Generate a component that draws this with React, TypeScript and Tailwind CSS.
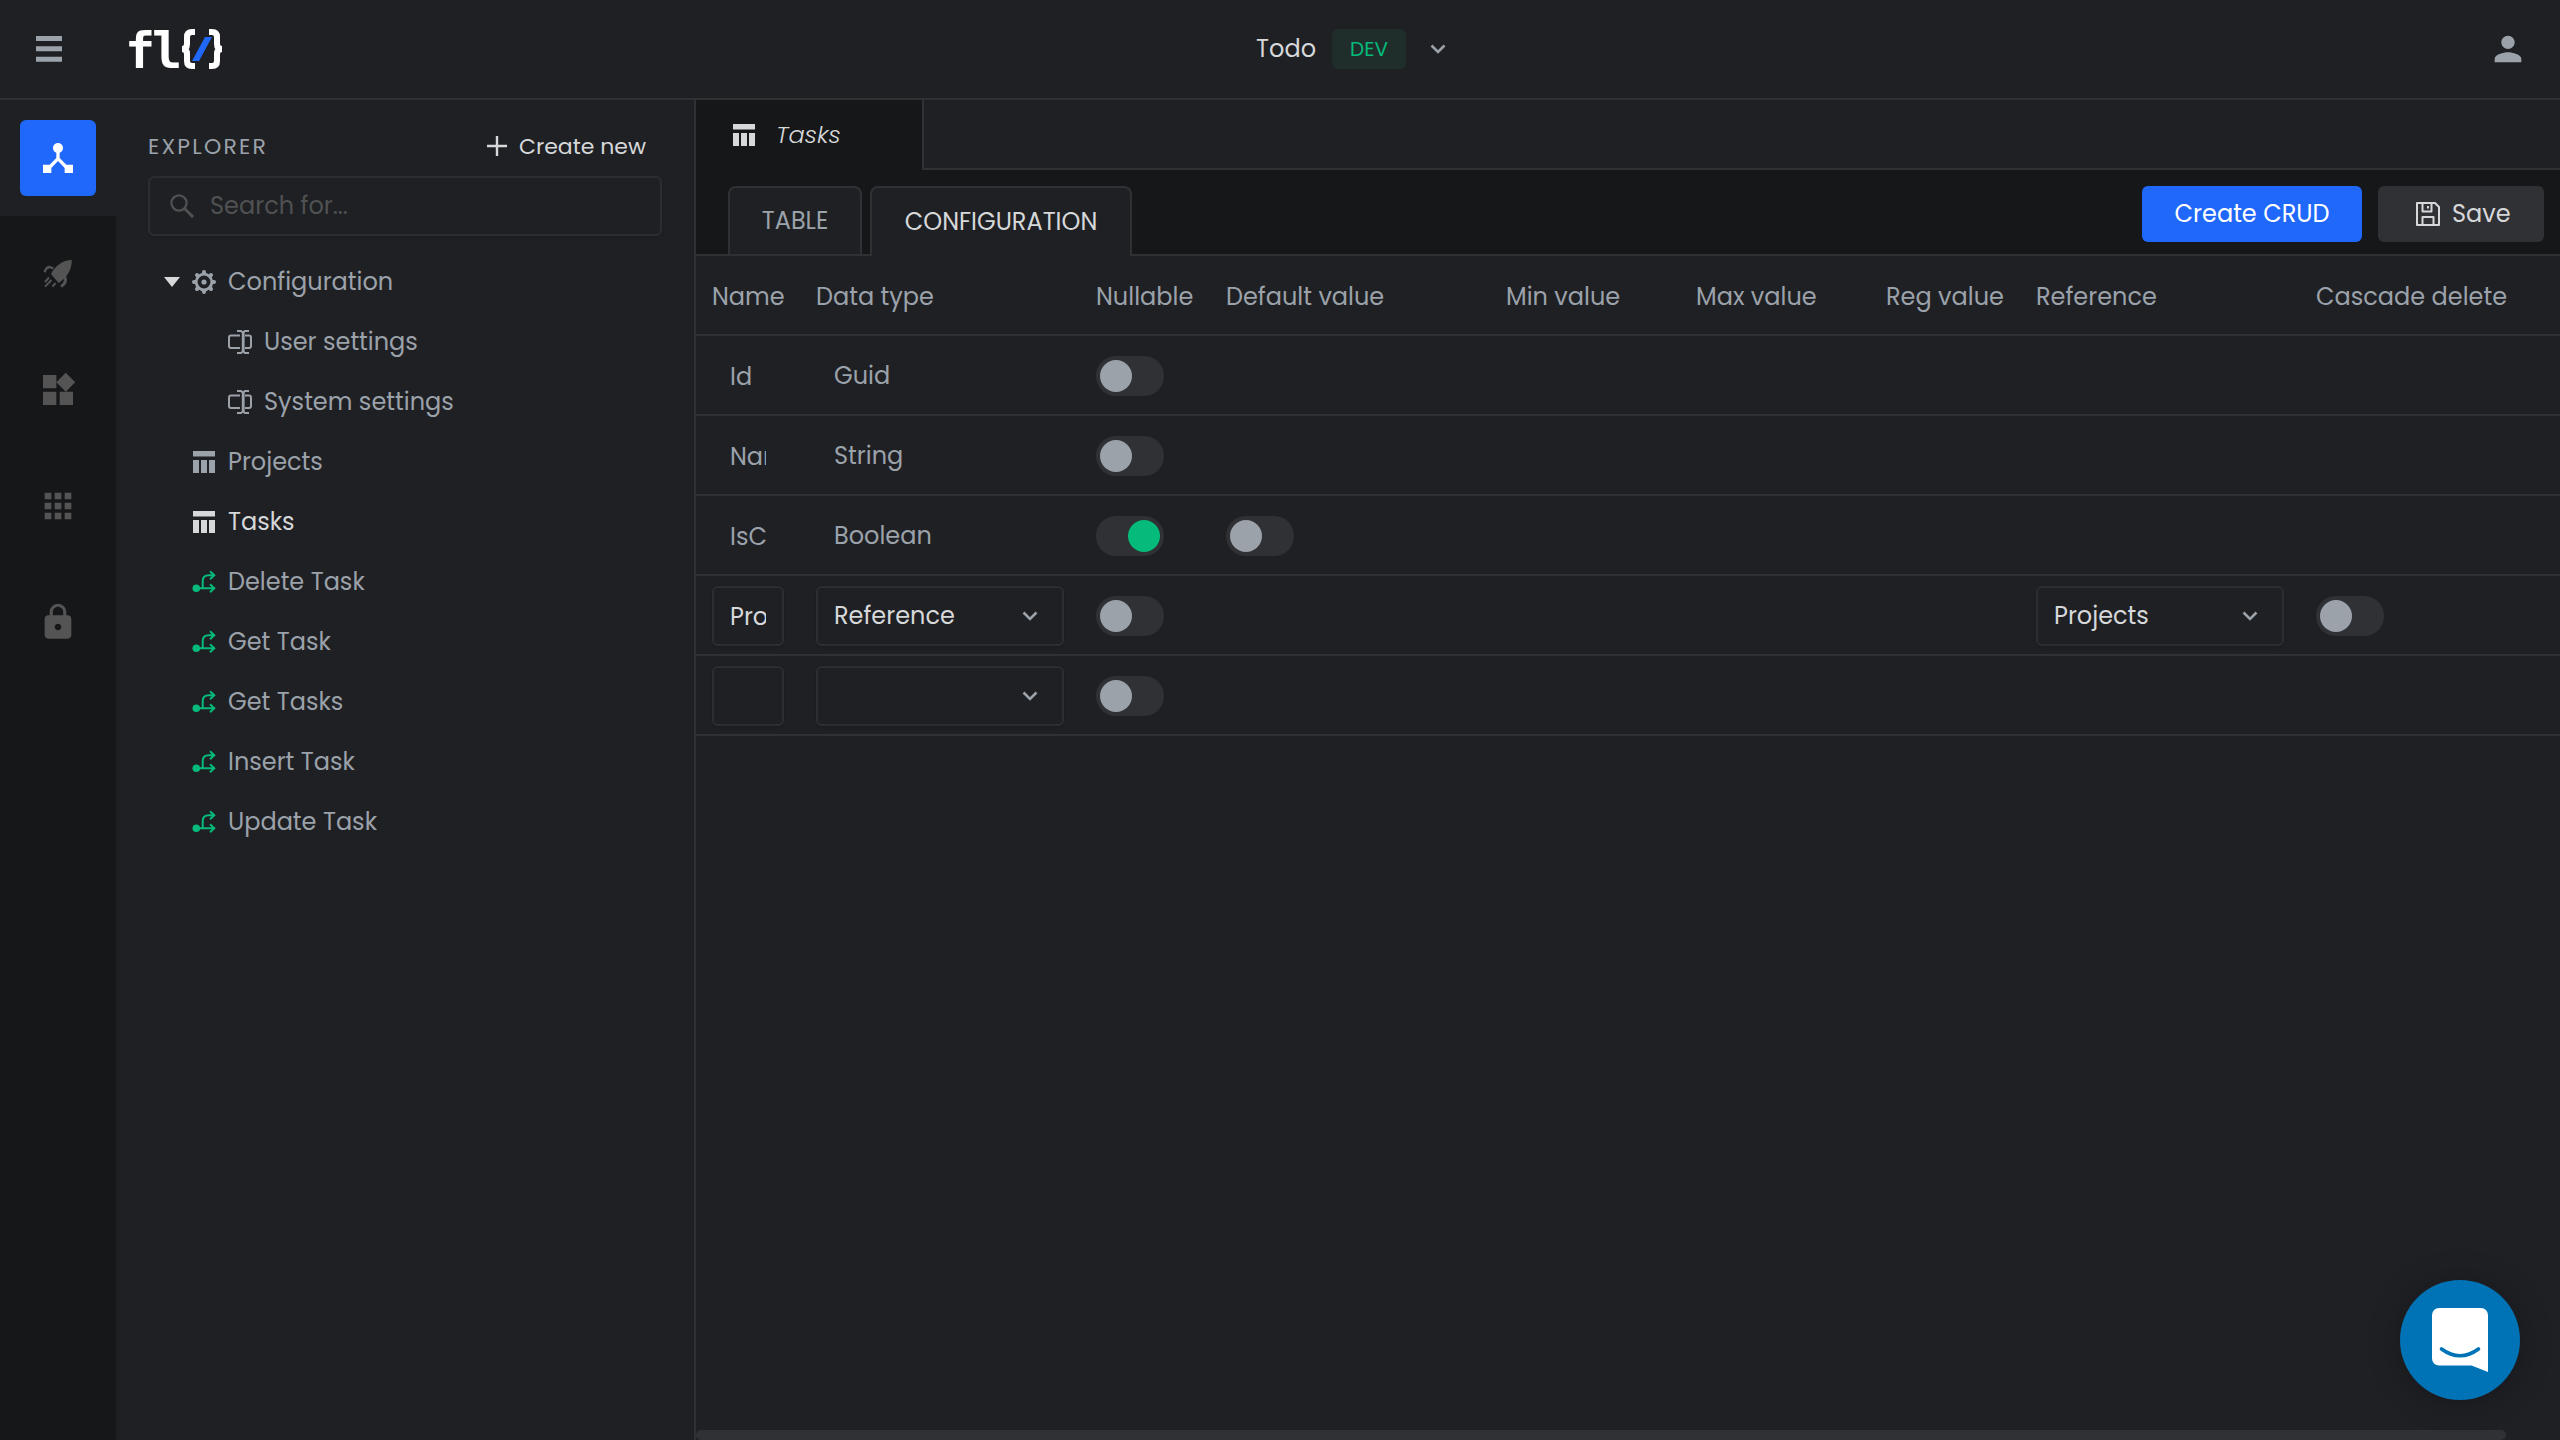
import React from "react";
import { MdApps, MdDeviceHub, MdLock, MdPerson, MdWidgets } from "react-icons/md";

// ─── Icons ────────────────────────────────────────────────────────────────────

type IconProps = { className?: string };

const MenuIcon = () => (
  <svg viewBox="0 0 26 26" className="h-[26px] w-[26px]" fill="currentColor">
    <path d="M0 0h26v5H0zM0 10.300h26v5H0zM0 20.800h26v5H0z" />
  </svg>
);

const RocketIcon = () => (
  <svg viewBox="0 0 32 32" className="h-8 w-8" fill="currentColor">
    <path d="M29.800 2C21 2 13 8 9 16l7.600 9C25 19.500 29.800 12 29.800 2z" />
    <g fill="none" stroke="currentColor" strokeWidth="2">
      <path d="M2.600 14.300C3.500 11 5 9.300 7.500 9l4 1.500" strokeWidth="2.400" />
      <path d="M22.500 18.500c1.500 3 1.500 7-3.500 10" strokeWidth="3.200" />
      <path d="M7 19.500l-4 4.500M9.500 22L3 28.600M13.500 25l-3 3.600" />
    </g>
  </svg>
);

const GearIcon = () => (
  <svg viewBox="0 0 24 24" className="h-6 w-6" fill="none" stroke="currentColor">
    <circle cx="12" cy="12" r="7.800" strokeWidth="2.800" />
    <circle cx="12" cy="12" r="2.600" fill="currentColor" stroke="none" />
    <path
      d="M12 3V2M12 22v-1M3 12H2M22 12h-1M5.600 5.600L5 5M19 19l-.6-.6M5.600 18.400L5 19M19 5l-.6.6"
      strokeWidth="4"
      strokeLinecap="round"
    />
  </svg>
);

const FieldIcon = () => (
  <svg viewBox="0 0 24 24" className="h-6 w-6" fill="none" stroke="currentColor" strokeWidth="2">
    <path d="M12 5.500H3a2 2 0 0 0-2 2V16a2 2 0 0 0 2 2h9M17 5.500h4a2 2 0 0 1 2 2V16a2 2 0 0 1-2 2h-4" />
    <path d="M9 1h4l2 1.500L17 1h4M9 23h4l2-1.500 2 1.500h4" />
    <path d="M15.200 2v20" strokeWidth="2.800" />
  </svg>
);

const TableIcon = () => (
  <svg viewBox="0 0 24 24" className="h-6 w-6" fill="currentColor">
    <path d="M1 1h22v5.600H1zM1 10h6v13H1zM9 10h6v13H9zM17 10h6v13h-6z" />
  </svg>
);

const FlowIcon = () => (
  <svg viewBox="0 0 24 24" className="h-6 w-6 text-[#05bb7b]" fill="none" stroke="currentColor" strokeWidth="2">
    <circle cx="4.300" cy="18.300" r="3.800" fill="currentColor" stroke="none" />
    <path d="M4 18.300h18M10.700 18.300V11c0-4 2-5.800 6-5.800h5.300" />
    <path d="M18 1.200l4.300 4-4.300 4M18 14.300l4.300 4-4.300 4" />
  </svg>
);

const SearchIcon = () => (
  <svg viewBox="0 0 24 24" className="h-6 w-6 text-[#4f5152]" fill="none" stroke="currentColor" strokeWidth="2.200">
    <circle cx="9" cy="9" r="7.600" />
    <path d="M14.500 14.500l8.500 8.500" strokeWidth="2.800" />
  </svg>
);

const PlusIcon = () => (
  <svg viewBox="0 0 20 20" className="h-5 w-5" stroke="currentColor" strokeWidth="2.400">
    <path d="M10 0v20M0 10h20" />
  </svg>
);

const SaveIcon = () => (
  <svg viewBox="0 0 24 24" className="h-6 w-6" fill="none" stroke="currentColor" strokeWidth="2" strokeLinejoin="round">
    <path d="M1 1h18l4 4v18H1z" />
    <path d="M6.500 1v8.500h9V1M12 4v2.500M6.500 23v-8h11v8" />
  </svg>
);

const ChevronIcon = ({ className }: IconProps) => (
  <svg viewBox="0 0 16 10" className={className} fill="none" stroke="currentColor" strokeWidth="2.600">
    <path d="M1.500 1.500L8 8l6.500-6.500" />
  </svg>
);

const Logo = () => (
  <svg viewBox="-4 -8 104 60" className="h-[60px] w-[104px]" fill="none">
    <text x="-1 26" y="41" fill="#fff" className="font-['DejaVu_Sans_Mono'] text-[50px] font-bold">
      fl
    </text>
    <g stroke="#fff" strokeWidth="6">
      <path d="M69 5h-3q-5 0-5 5v7q0 5-5 5q5 0 5 5v7q0 5 5 5h3" />
      <path d="M83 5h3q5 0 5 5v7q0 5 5 5q-5 0-5 5v7q0 5-5 5h-3" />
    </g>
    <path d="M79 10h7L73 34h-7z" fill="#2068fa" />
  </svg>
);

// ─── Top Bar ──────────────────────────────────────────────────────────────────

const TopBar = () => (
  <header className="grid h-[100px] grid-cols-[1fr_auto_1fr] items-center border-b-2 border-[#303135] text-[#9ba2aa]">
    <div className="flex items-center gap-[60px] pl-9">
      <button type="button" aria-label="Menu">
        <MenuIcon />
      </button>
      <Logo />
    </div>
    <button type="button" className="ml-[142px] flex items-center gap-4 text-[#d6d8da]">
      <span className="text-[24px]">Todo</span>
      <span className="flex h-10 items-center rounded-md bg-[#1f2e2b] px-[18px] text-[20px] text-[#05bb7b]">DEV</span>
      <ChevronIcon className="ml-2 h-2.5 w-4 text-[#9ba2aa]" />
    </button>
    <div className="flex justify-end pr-8">
      <button type="button" aria-label="Account">
        <MdPerson className="h-10 w-10" />
      </button>
    </div>
  </header>
);

// ─── Rail ─────────────────────────────────────────────────────────────────────

const RAIL_ITEMS = [
  { label: "Deploy", icon: <RocketIcon /> },
  { label: "Widgets", icon: <MdWidgets className="h-10 w-10" /> },
  { label: "Apps", icon: <MdApps className="h-10 w-10" /> },
  { label: "Security", icon: <MdLock className="h-10 w-10" /> },
];

const Rail = () => (
  <nav className="flex w-[116px] shrink-0 flex-col bg-[#161719]">
    <div className="flex h-[116px] items-center justify-center bg-[#1f2024]">
      <button
        type="button"
        aria-label="Explorer"
        className="flex h-[76px] w-[76px] items-center justify-center rounded-md bg-[#2068fa] text-white"
      >
        <MdDeviceHub className="h-10 w-10" />
      </button>
    </div>
    {RAIL_ITEMS.map((item) => (
      <button
        key={item.label}
        type="button"
        aria-label={item.label}
        className="flex h-[116px] items-center justify-center text-[#545454]"
      >
        {item.icon}
      </button>
    ))}
  </nav>
);

// ─── Explorer ─────────────────────────────────────────────────────────────────

type TreeItemProps = {
  label: string;
  icon: React.ReactNode;
  nested?: boolean;
  active?: boolean;
  expanded?: boolean;
};

const TREE: TreeItemProps[] = [
  { label: "Configuration", icon: <GearIcon />, expanded: true },
  { label: "User settings", icon: <FieldIcon />, nested: true },
  { label: "System settings", icon: <FieldIcon />, nested: true },
  { label: "Projects", icon: <TableIcon /> },
  { label: "Tasks", icon: <TableIcon />, active: true },
  { label: "Delete Task", icon: <FlowIcon /> },
  { label: "Get Task", icon: <FlowIcon /> },
  { label: "Get Tasks", icon: <FlowIcon /> },
  { label: "Insert Task", icon: <FlowIcon /> },
  { label: "Update Task", icon: <FlowIcon /> },
];

const TreeItem = ({ label, icon, nested, active, expanded }: TreeItemProps) => (
  <li>
    <button
      type="button"
      className={`flex h-[60px] w-full items-center gap-3 text-[24px] ${nested ? "pl-20" : "pl-4"} ${
        active ? "text-[#d6d8da]" : "text-[#9ba2aa]"
      }`}
    >
      {!nested && (
        <svg viewBox="0 0 16 10" className="h-2.5 w-4 fill-[#d6d8da]">
          {expanded && <path d="M0 0h16L8 10z" />}
        </svg>
      )}
      {icon}
      <span>{label}</span>
    </button>
  </li>
);

const Explorer = () => (
  <aside className="w-[580px] shrink-0 border-r-2 border-[#303135] pr-8 pl-8">
    <div className="flex h-[76px] items-center justify-between pt-4 pr-4">
      <h2 className="text-[22px] tracking-widest text-[#9ba2aa]">EXPLORER</h2>
      <button type="button" className="flex items-center gap-3 text-[22px] text-[#d6d8da]">
        <PlusIcon />
        Create new
      </button>
    </div>
    <label className="flex h-[60px] items-center gap-4 rounded-md border-2 border-[#2c2d33] px-5 shadow">
      <SearchIcon />
      <input
        type="text"
        aria-label="Search"
        placeholder="Search for..."
        className="min-w-0 flex-1 bg-transparent text-[24px] outline-none placeholder:text-[#4f5152]"
      />
    </label>
    <ul className="pt-4">
      {TREE.map((item) => (
        <TreeItem key={item.label} {...item} />
      ))}
    </ul>
  </aside>
);

// ─── Form Controls ────────────────────────────────────────────────────────────

const Toggle = ({ label, on }: { label: string; on?: boolean }) => (
  <input
    type="checkbox"
    aria-label={label}
    defaultChecked={on}
    className="block h-10 w-[68px] appearance-none rounded-full bg-[#303135] p-1 before:block before:h-8 before:w-8 before:rounded-full before:bg-[#9ba2aa] checked:before:ml-7 checked:before:bg-[#05bb7b]"
  />
);

const NameField = ({ value, disabled }: { value: string; disabled?: boolean }) => (
  <input
    type="text"
    aria-label="Name"
    defaultValue={value}
    disabled={disabled}
    className="block h-[60px] w-full rounded-md border-2 border-[#2c2d33] bg-transparent px-4 text-[#d6d8da] shadow disabled:border-transparent disabled:text-[#9ba2aa] disabled:shadow-none"
  />
);

const SelectField = ({ label, value, disabled }: { label: string; value: string; disabled?: boolean }) => (
  <div className="grid items-center">
    <select
      aria-label={label}
      defaultValue={value}
      disabled={disabled}
      className="col-start-1 row-start-1 h-[60px] w-full appearance-none rounded-md border-2 border-[#2c2d33] bg-transparent px-4 text-[#d6d8da] shadow disabled:border-transparent disabled:text-[#9ba2aa] disabled:opacity-100 disabled:shadow-none"
    >
      <option>{value}</option>
    </select>
    {!disabled && (
      <ChevronIcon className="pointer-events-none col-start-1 row-start-1 mr-[26px] h-2.5 w-4 justify-self-end text-[#9ba2aa]" />
    )}
  </div>
);

// ─── Columns Table ────────────────────────────────────────────────────────────

type Column = {
  name: string;
  type: string;
  locked?: boolean;
  nullable?: boolean;
  hasDefault?: boolean;
  reference?: string;
};

const COLUMNS: Column[] = [
  { name: "Id", type: "Guid", locked: true },
  { name: "Name", type: "String", locked: true },
  { name: "IsCompleted", type: "Boolean", locked: true, nullable: true, hasDefault: true },
  { name: "ProjectId", type: "Reference", reference: "Projects" },
  { name: "", type: "" },
];

const HEADERS = [
  { label: "Name", width: "w-[104px]" },
  { label: "Data type", width: "w-[280px]" },
  { label: "Nullable", width: "w-[130px]" },
  { label: "Default value", width: "w-[280px]" },
  { label: "Min value", width: "w-[190px]" },
  { label: "Max value", width: "w-[190px]" },
  { label: "Reg value", width: "w-[150px]" },
  { label: "Reference", width: "w-[280px]" },
  { label: "Cascade delete", width: "w-[316px]" },
];

const CELL = "border-b-2 border-[#303135] px-4 pt-2.5 pb-2";

const ColumnsTable = () => (
  <div className="flex-1 overflow-hidden">
    <table className="w-full min-w-[1920px] table-fixed border-separate border-spacing-0 text-[24px] text-[#9ba2aa]">
      <thead>
        <tr>
          {HEADERS.map((header) => (
            <th
              key={header.label}
              className={`${header.width} h-20 border-b-2 border-[#303135] px-4 pt-1 text-left font-normal whitespace-nowrap`}
            >
              {header.label}
            </th>
          ))}
        </tr>
      </thead>
      <tbody>
        {COLUMNS.map((column) => (
          <tr key={column.name}>
            <td className={CELL}>
              <NameField value={column.name} disabled={column.locked} />
            </td>
            <td className={CELL}>
              <SelectField label="Data type" value={column.type} disabled={column.locked} />
            </td>
            <td className={CELL}>
              <Toggle label="Nullable" on={column.nullable} />
            </td>
            <td className={CELL}>{column.hasDefault && <Toggle label="Default value" />}</td>
            <td className={CELL} />
            <td className={CELL} />
            <td className={CELL} />
            <td className={CELL}>
              {column.reference && <SelectField label="Reference" value={column.reference} />}
            </td>
            <td className={CELL}>{column.reference && <Toggle label="Cascade delete" />}</td>
          </tr>
        ))}
      </tbody>
    </table>
  </div>
);

// ─── Workspace ────────────────────────────────────────────────────────────────

const Workspace = () => (
  <main className="flex min-w-0 flex-1 flex-col">
    {/* Open files */}
    <div className="flex h-[70px]">
      <button
        type="button"
        className="flex w-[226px] items-center gap-5 bg-[#161719] pl-9 text-[24px] font-light text-[#d6d8da] italic"
      >
        <TableIcon />
        Tasks
      </button>
      <div className="flex-1 border-b-2 border-l-2 border-[#303135]" />
    </div>

    {/* Views and actions */}
    <div className="flex h-[86px] items-end bg-[#161719] text-[24px] text-[#d6d8da]">
      <div className="w-8 self-stretch border-b-2 border-[#303135]" />
      <button
        type="button"
        className="h-[70px] w-[134px] rounded-t-lg border-2 border-[#303135] bg-[#1f2024] text-[#9ba2aa]"
      >
        TABLE
      </button>
      <div className="w-2 self-stretch border-b-2 border-[#303135]" />
      <button
        type="button"
        className="h-[70px] w-[262px] rounded-t-lg border-2 border-b-0 border-[#303135] bg-[#1f2024]"
      >
        CONFIGURATION
      </button>
      <div className="flex flex-1 justify-end gap-4 self-stretch border-b-2 border-[#303135] pt-4 pr-4">
        <button type="button" className="h-14 w-[220px] rounded-md bg-[#2068fa] text-white">
          Create CRUD
        </button>
        <button
          type="button"
          className="flex h-14 w-[166px] items-center gap-3 rounded-md bg-[#303135] pl-[38px]"
        >
          <SaveIcon />
          Save
        </button>
      </div>
    </div>

    <ColumnsTable />

    {/* Horizontal scroll thumb */}
    <div className="mr-[54px] h-2.5 rounded-md bg-[#303135]" />
  </main>
);

// ─── Chat ─────────────────────────────────────────────────────────────────────

const ChatButton = () => (
  <button
    type="button"
    aria-label="Open chat"
    className="fixed right-10 bottom-10 flex h-[120px] w-[120px] items-center justify-center rounded-full bg-[#0073b7] shadow-[0_2px_32px_rgba(0,0,0,0.25)]"
  >
    <svg viewBox="0 0 56 64" className="h-16 w-14">
      <path d="M7 0h42a7 7 0 0 1 7 7v57l-16.500-6.500H7a7 7 0 0 1-7-7V7a7 7 0 0 1 7-7z" fill="#fff" />
      <path d="M9.500 41q18.500 13.500 37 0" fill="none" stroke="#0073b7" strokeWidth="3.600" strokeLinecap="round" />
    </svg>
  </button>
);

export default function App() {
  return (
    <div className="flex min-h-screen flex-col bg-[#1f2024] font-[Poppins,Inter,sans-serif]">
      <TopBar />
      <div className="flex flex-1">
        <Rail />
        <Explorer />
        <Workspace />
      </div>
      <ChatButton />
    </div>
  );
}
